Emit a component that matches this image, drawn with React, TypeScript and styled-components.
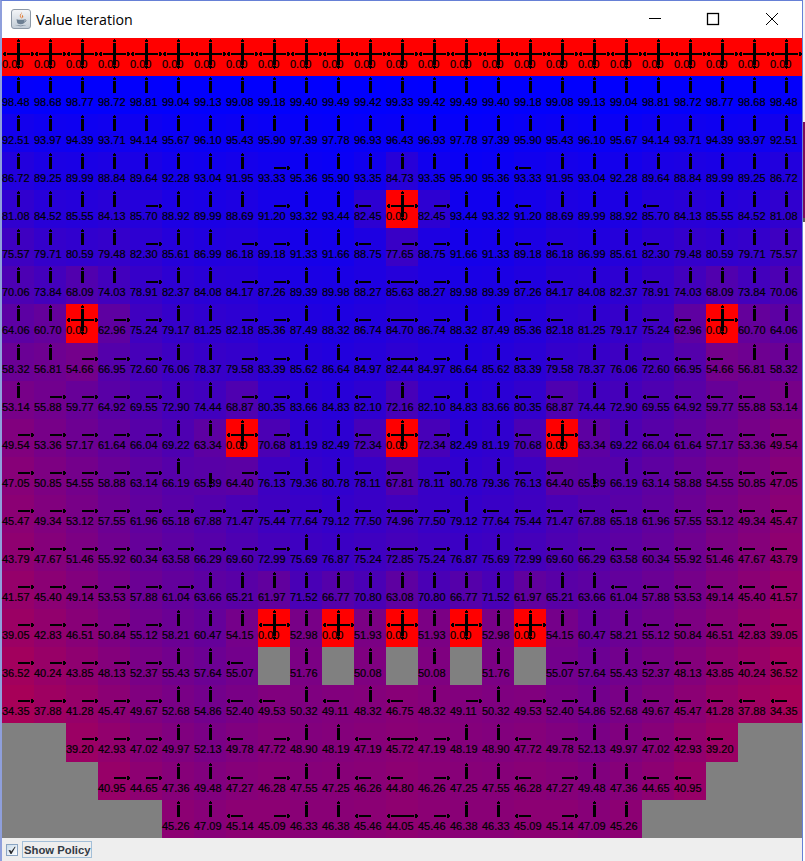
import React from "react";
import styled, { createGlobalStyle } from "styled-components";

const GlobalStyle = createGlobalStyle`
  html, body { margin: 0; padding: 0; background: #fff; overflow: hidden; }
  #root { width: 805px; height: 861px; }
`;

const Desktop = styled.div`
  display: flex;
  width: 805px;
  height: 861px;
`;

const Frame = styled.div`
  display: flex;
  flex-direction: column;
  width: 803px;
  height: 861px;
  box-sizing: border-box;
  border-top: 1px solid #6680d6;
  border-left: 2px solid #8f9fdc;
  border-right: 1px solid #6680d6;
  background: #eeeeee;
`;

const BehindStrip = styled.div`
  width: 2px;
  height: 861px;
  background: linear-gradient(
    to bottom,
    #f4f4f4 0 122px,
    #7d0a5c 122px 218px,
    #5a5a5a 218px 222px,
    #ffffff 222px 100%
  );
`;

const TitleBar = styled.div`
  display: flex;
  align-items: center;
  height: 37px;
  flex: none;
  background: #fff;
  padding-left: 9px;
  padding-right: 2px;
  padding-bottom: 1px;
  box-sizing: border-box;
`;

const AppIcon = styled.svg`
  width: 20px;
  height: 20px;
  flex: none;
`;

const Title = styled.span`
  font-family: "Open Sans", "Noto Sans", sans-serif;
  font-size: 14.2px;
  color: #000;
  margin-left: 5px;
  flex: 1;
`;

const WindowControl = styled.svg`
  width: 58px;
  height: 14px;
  flex: none;
  fill: none;
  stroke: #000;
`;

const Board = styled.div`
  display: grid;
  grid-template-columns: repeat(25, 32px);
  grid-template-rows: repeat(7, 38px) 39px repeat(10, 38px) 39px repeat(2, 38px);
  width: 800px;
  height: 800px;
  flex: none;
`;

const Cell = styled.div<{ $kind: "value" | "terminal" | "wall" }>`
  position: relative;
  box-sizing: border-box;
  padding-top: 21px;
  min-width: 0;
  font-family: "Liberation Sans", Arial, sans-serif;
  font-size: 11px;
  line-height: 11px;
  color: #000;
  -webkit-text-stroke: 0.2px #000;
  white-space: nowrap;
  background: ${(p) =>
    p.$kind === "terminal" ? "#ff0000" : p.$kind === "wall" ? "#808080" : "transparent"};
`;

const ArrowLayer = styled.svg`
  position: absolute;
  left: 0;
  top: 0;
  width: 32px;
  height: 32px;
  overflow: visible;
  fill: #000;
  shape-rendering: crispEdges;
`;

const Footer = styled.div`
  display: flex;
  align-items: center;
  flex: 1;
  gap: 4px;
  padding-left: 4px;
`;

const CheckBox = styled.span`
  display: flex;
  align-items: center;
  justify-content: center;
  width: 12px;
  height: 12px;
  box-sizing: border-box;
  border: 1px solid #8aa4c2;
  background: linear-gradient(135deg, #c9dbea, #ffffff);
`;

const CheckMark = styled.svg`
  width: 10px;
  height: 10px;
  fill: #2a2a2a;
`;

const PolicyButton = styled.span`
  display: flex;
  align-items: center;
  height: 17px;
  box-sizing: border-box;
  border: 1px solid #a3bfd8;
  padding-left: 1px;
  font-family: "Liberation Sans", Arial, sans-serif;
  font-weight: bold;
  font-size: 11.3px;
  color: #333a45;
  background: #eeeeee;
`;

const VALUES: (number | null)[][] = [
  [98.48, 98.68, 98.77, 98.72, 98.81, 99.04, 99.13, 99.08, 99.18, 99.4, 99.49, 99.42, 99.33],
  [92.51, 93.97, 94.39, 93.71, 94.14, 95.67, 96.1, 95.43, 95.9, 97.39, 97.78, 96.93, 96.43],
  [86.72, 89.25, 89.99, 88.84, 89.64, 92.28, 93.04, 91.95, 93.33, 95.36, 95.9, 93.35, 84.73],
  [81.08, 84.52, 85.55, 84.13, 85.7, 88.92, 89.99, 88.69, 91.2, 93.32, 93.44, 82.45, 0],
  [75.57, 79.71, 80.59, 79.48, 82.3, 85.61, 86.99, 86.18, 89.18, 91.33, 91.66, 88.75, 77.65],
  [70.06, 73.84, 68.09, 74.03, 78.91, 82.37, 84.08, 84.17, 87.26, 89.39, 89.98, 88.27, 85.63],
  [64.06, 60.7, 0, 62.96, 75.24, 79.17, 81.25, 82.18, 85.36, 87.49, 88.32, 86.74, 84.7],
  [58.32, 56.81, 54.66, 66.95, 72.6, 76.06, 78.37, 79.58, 83.39, 85.62, 86.64, 84.97, 82.44],
  [53.14, 55.88, 59.77, 64.92, 69.55, 72.9, 74.44, 68.87, 80.35, 83.66, 84.83, 82.1, 72.16],
  [49.54, 53.36, 57.17, 61.64, 66.04, 69.22, 63.34, 0, 70.68, 81.19, 82.49, 72.34, 0],
  [47.05, 50.85, 54.55, 58.88, 63.14, 66.19, 65.39, 64.4, 76.13, 79.36, 80.78, 78.11, 67.81],
  [45.47, 49.34, 53.12, 57.55, 61.96, 65.18, 67.88, 71.47, 75.44, 77.64, 79.12, 77.5, 74.96],
  [43.79, 47.67, 51.46, 55.92, 60.34, 63.58, 66.29, 69.6, 72.99, 75.69, 76.87, 75.24, 72.85],
  [41.57, 45.4, 49.14, 53.53, 57.88, 61.04, 63.66, 65.21, 61.97, 71.52, 66.77, 70.8, 63.08],
  [39.05, 42.83, 46.51, 50.84, 55.12, 58.21, 60.47, 54.15, 0, 52.98, 0, 51.93, 0],
  [36.52, 40.24, 43.85, 48.13, 52.37, 55.43, 57.64, 55.07, null, 51.76, null, 50.08, null],
  [34.35, 37.88, 41.28, 45.47, 49.67, 52.68, 54.86, 52.4, 49.53, 50.32, 49.11, 48.32, 46.75],
  [null, null, 39.2, 42.93, 47.02, 49.97, 52.13, 49.78, 47.72, 48.9, 48.19, 47.19, 45.72],
  [null, null, null, 40.95, 44.65, 47.36, 49.48, 47.27, 46.28, 47.55, 47.25, 46.26, 44.8],
  [null, null, null, null, null, 45.26, 47.09, 45.14, 45.09, 46.33, 46.38, 45.46, 44.05],
];

// Left half of each row (the board mirrors around column 12).
// U up, R right, L left, D down, B left+right, C all four, W wall (no arrow)
const POLICY: string[] = [
  "UUUUUUUUUUUUU",
  "UUUUUUUUUUUUU",
  "UUUUUUUURUUUU",
  "UUUURUUURUULC",
  "UUUURUURRUULR",
  "UUUURUURRUULB",
  "UUCRRUURRUULB",
  "UURRRUURRUULB",
  "URRRRUURRUULU",
  "RRRRRUUCRUULC",
  "RRRRRUDRRUULL",
  "RRRRRRRRRRULB",
  "RRRRRRRRRUULB",
  "RRRRRRUUUUUUU",
  "RRRRRUUUCUCUC",
  "RRRRRUULWUWUW",
  "RRRRRUULLULUL",
  "WWRRRUULRUULB",
  "WWWRRUULRUULL",
  "WWWWWUULRUULB",
];

const SWAP: Record<string, string> = { R: "L", L: "R" };

const ARROWS: Record<string, string> = {
  U: "M15 5h3v12h-3zM16 1h1v1h-1zM15 2h3v2h-3z",
  D: "M15 16h3v11h-3zM15 28h3v2h-3zM16 30h1v1h-1z",
  R: "M16 15h12v2H16zM29 14h2v4h-2zM31 15h1v2h-1z",
  L: "M5 15h12v2H5zM2 14h2v4H2zM1 15h1v2H1z",
};

const EXPAND: Record<string, string> = { U: "U", D: "D", R: "R", L: "L", B: "LR", C: "URDL", W: "" };

type CellData = { value: number | null; dirs: string };

const row = (r: number): CellData[] => {
  const left = VALUES[r].map((value, c) => ({ value, dirs: EXPAND[POLICY[r][c]] }));
  const right = left
    .slice(0, 12)
    .reverse()
    .map((cell) => ({
      value: cell.value,
      dirs: cell.dirs.replace(/[RL]/g, (d) => SWAP[d]),
    }));
  return [...left, ...right];
};

const CELLS: CellData[] = [
  ...Array.from({ length: 25 }, () => ({ value: 0, dirs: "URDL" })),
  ...VALUES.flatMap((_, r) => row(r)),
];

const heat = (v: number) =>
  `rgb(${Math.round(255 * (1 - v / 100))}, 0, ${Math.round((255 * v) / 100)})`;

const GridCell = ({ value, dirs }: CellData) => {
  const kind = value === null ? "wall" : value === 0 ? "terminal" : "value";
  return (
    <Cell $kind={kind} style={kind === "value" ? { background: heat(value as number) } : undefined}>
      {value !== null && value.toFixed(2)}
      {dirs && (
        <ArrowLayer viewBox="0 0 32 32">
          <path d={dirs.split("").map((d) => ARROWS[d]).join("")} />
        </ArrowLayer>
      )}
    </Cell>
  );
};

const JavaIcon = () => (
  <AppIcon viewBox="0 0 20 20">
    <defs>
      <linearGradient id="tile" x1="0" y1="0" x2="0" y2="1">
        <stop offset="0" stopColor="#f4f6f8" />
        <stop offset="1" stopColor="#c2ccd6" />
      </linearGradient>
    </defs>
    <rect x="0.5" y="0.5" width="19" height="19" rx="2.5" fill="url(#tile)" stroke="#8d99a6" />
    <path d="M10.5 3c1.5 1.6-2 2.6-.6 4.8.5.8 1 1.1.9 1.9-1-.9-2.6-1.9-1.9-3.6C9.400 5 11 4.500 10.500 3z" fill="#e2762a" />
    <path d="M12 5.500c-1.200.7-1.400 1.500-.8 2.500.3.500.3.900.1 1.200.9-.500 1.300-1.400.7-2.200-.5-.6-.4-1 0-1.500z" fill="#e2762a" />
    <path d="M5.500 10.200c2.500.7 6.300.7 8.300 0l-.6 3.400c-.3 1.100-1.300 1.600-3.500 1.600s-3.300-.5-3.600-1.600z" fill="#6d7f92" />
    <path d="M13.800 10.800c1.600-.3 2 1.700-.9 2.500" fill="none" stroke="#6d7f92" />
    <path d="M4 15.800c2.800 1.200 8.500 1.200 11.500 0-1.200 1.700-10 1.900-11.500 0z" fill="#53677c" />
  </AppIcon>
);

export default function App() {
  return (
    <>
      <GlobalStyle />
      <Desktop>
        <Frame>
          <TitleBar>
            <JavaIcon />
            <Title>Value Iteration</Title>
            <WindowControl viewBox="0 0 58 14">
              <path d="M23 6.500h12" />
            </WindowControl>
            <WindowControl viewBox="0 0 58 14" strokeWidth="1.300">
              <rect x="23.500" y="1.500" width="11" height="11" />
            </WindowControl>
            <WindowControl viewBox="0 0 58 14">
              <path d="M24 1l12 12M36 1L24 13" />
            </WindowControl>
          </TitleBar>
          <Board>
            {CELLS.map((cell, i) => (
              <GridCell key={i} {...cell} />
            ))}
          </Board>
          <Footer>
            <CheckBox>
              <CheckMark viewBox="0 0 10 10">
                <path d="M1.500 5l2 .2.7 1.300L8 1.500 8.500 2 4.500 9h-1z" />
              </CheckMark>
            </CheckBox>
            <PolicyButton>Show Policy</PolicyButton>
          </Footer>
        </Frame>
        <BehindStrip />
      </Desktop>
    </>
  );
}
